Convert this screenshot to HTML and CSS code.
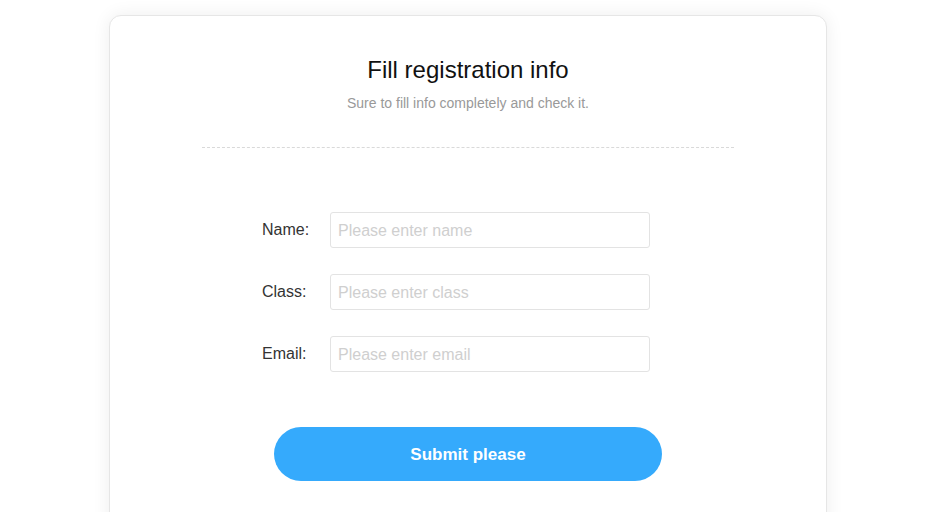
FILE: index.html
```html
<html>
  <head>
    <link rel="stylesheet" href="styles.css">
  </head>

  <body class="page">

    <div class="card">
      <div class="card-header">
        <h1 class="card-title">Fill registration info</h1>
        <p class="card-subtitle">Sure to fill info completely and check it.</p>
      </div>
      <div class="divider"></div>

      <form class="reg-form">
        <div class="form-row">
          <label class="form-label" for="name">Name:</label>
          <input class="form-input" id="name" type="text" placeholder="Please enter name">
        </div>
        <div class="form-row">
          <label class="form-label" for="class">Class:</label>
          <input class="form-input" id="class" type="text" placeholder="Please enter class">
        </div>
        <div class="form-row">
          <label class="form-label" for="email">Email:</label>
          <input class="form-input" id="email" type="text" placeholder="Please enter email">
        </div>
      </form>

      <button class="submit-btn" type="button">Submit please</button>
    </div>

  </body>
</html>
```

FILE: styles.css
```css
html, body {
  margin: 0;
  padding: 0;
}
.page {
  background: #fff;
  font-family: "Liberation Sans", Arial, sans-serif;
  overflow: hidden;
  height: 512px;
}
.card {
  box-sizing: border-box;
  width: 718px;
  height: 520px;
  margin: 15px 0 0 109px;
  padding-top: 40px;
  border: 1px solid #e6e6e6;
  border-radius: 12px;
  background: #fff;
  box-shadow: 0 0 18px rgba(0, 0, 0, 0.07);
  display: flex;
  flex-direction: column;
  align-items: center;
}
.card-header {
  text-align: center;
}
.card-title {
  margin: 0;
  font-size: 24px;
  line-height: 28px;
  font-weight: normal;
  color: #111;
}
.card-subtitle {
  margin: 9px 0 0;
  font-size: 14px;
  line-height: 20px;
  color: #999;
}
.divider {
  width: 532px;
  margin-top: 34px;
  border-top: 1px dashed #d9d9d9;
}
.reg-form {
  margin: 64px 0 0;
  width: 412px;
  padding-right: 24px;
  box-sizing: border-box;
  display: flex;
  flex-direction: column;
  gap: 26px;
}
.form-row {
  display: flex;
  align-items: center;
}
.form-label {
  width: 68px;
  font-size: 16px;
  color: #333;
}
.form-input {
  box-sizing: border-box;
  width: 320px;
  height: 36px;
  padding: 1px 7px 0;
  border: 1px solid #e3e3e3;
  border-radius: 3px;
  font-family: inherit;
  font-size: 16px;
  color: #333;
  outline: none;
}
.form-input::placeholder {
  color: #cfcfcf;
}
.submit-btn {
  margin-top: 55px;
  padding-top: 3px;
  width: 388px;
  height: 54px;
  border: none;
  border-radius: 27px;
  background: #35aafc;
  color: #fff;
  font-family: inherit;
  font-size: 17px;
  font-weight: bold;
  cursor: pointer;
}
```
